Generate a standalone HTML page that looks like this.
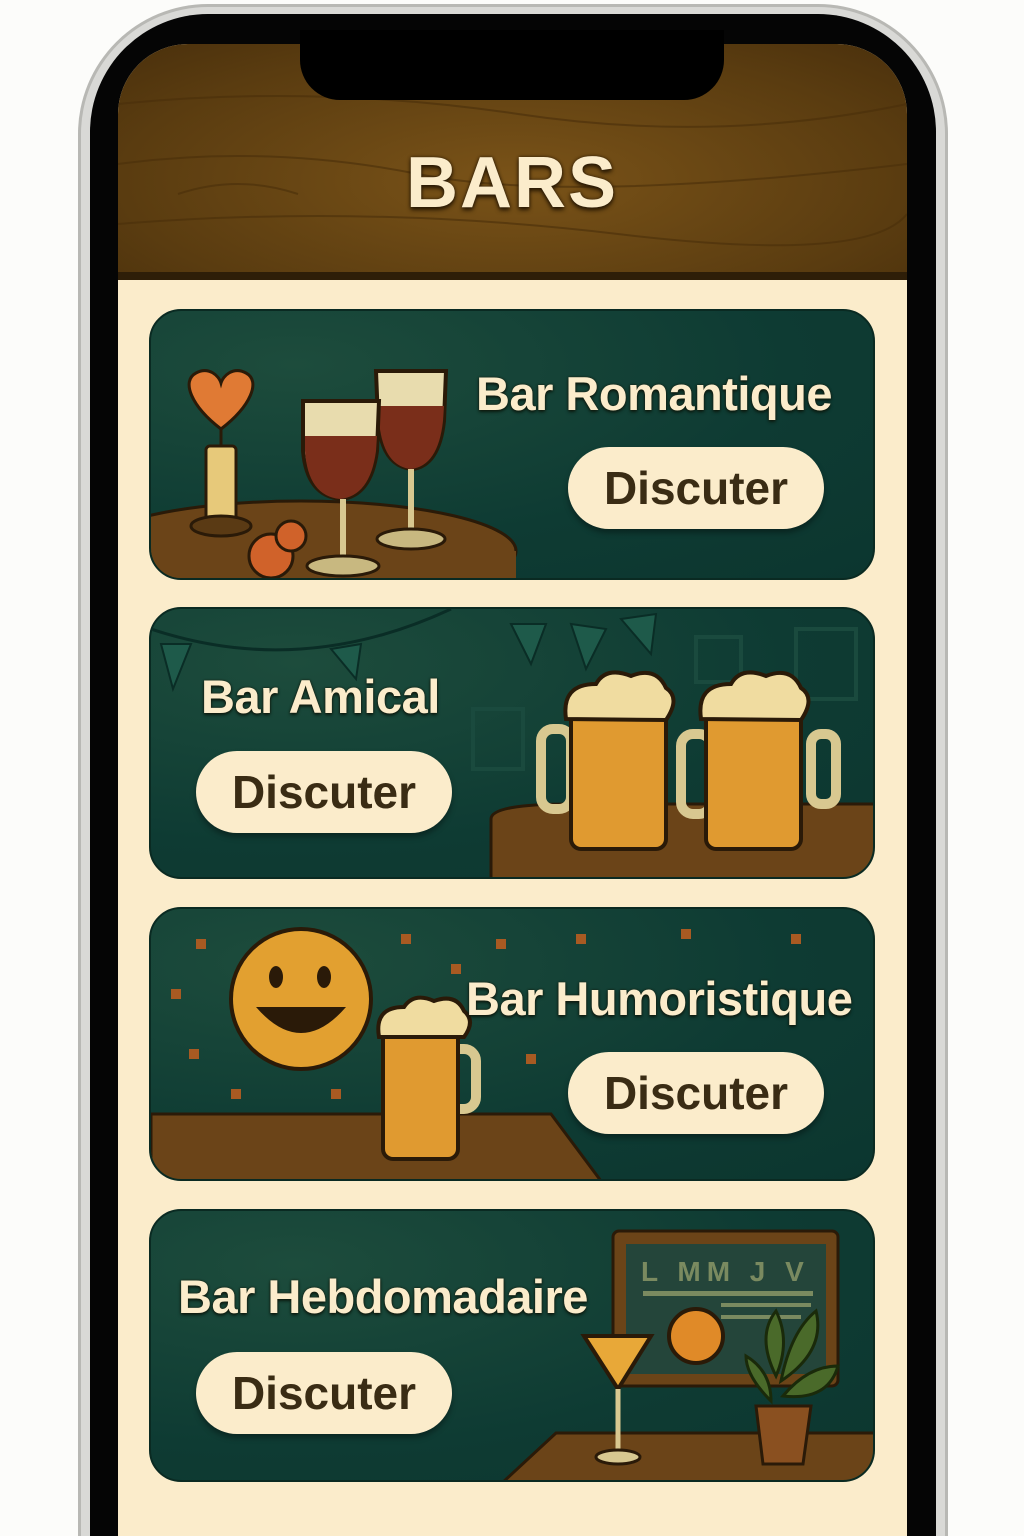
<!DOCTYPE html>
<html style="width:1024px;height:1536px;overflow:hidden"><head><meta charset="utf-8"><style>
*{margin:0;padding:0;box-sizing:border-box}
body{width:1024px;height:1536px;background:#fcfcfa;position:relative;overflow:hidden;font-family:"Liberation Sans",sans-serif}
.frame{position:absolute;left:78px;top:4px;width:870px;height:1532px;border-radius:130px 130px 0 0;background:#d9d9d6;border:3px solid #b8b8b4;border-bottom:none}
.bezel{position:absolute;left:90px;top:14px;width:846px;height:1522px;border-radius:118px 118px 0 0;background:#050505}
.screen{position:absolute;left:118px;top:44px;width:789px;height:1492px;border-radius:70px 70px 0 0;background:#fbeccb;overflow:hidden}
.head{position:absolute;left:0;top:0;width:789px;height:236px;background:radial-gradient(ellipse at 50% 60%,#7a5318,#5a3c10 70%,#4a300c);border-bottom:8px solid #2e1e08}
.notch{position:absolute;left:300px;top:30px;width:424px;height:70px;background:#000;border-radius:0 0 40px 40px}
.title{position:absolute;left:0;width:1024px;top:142px;text-align:center;font-size:72px;font-weight:bold;color:#fbeccb;letter-spacing:2px;text-shadow:0 0 3px #2a1a05,0 3px 4px #2a1a05}
.card{position:absolute;left:149px;width:726px;border-radius:32px;background:radial-gradient(ellipse at 20% 20%,#1d4c3c,#0e3b33 60%,#0c362f);overflow:hidden;border:2px solid #0a2a22}
.card svg{position:absolute;left:0;top:0}
.t{position:absolute;font-size:47px;font-weight:bold;color:#fbeccb;text-shadow:0 0 2px #1a1a0a,0 2px 3px #0a1a10;letter-spacing:-0.5px;white-space:nowrap}
.b{position:absolute;width:256px;height:82px;border-radius:41px;background:#fbeccb;color:#3a2c14;font-size:46px;font-weight:bold;text-align:center;line-height:82px;box-shadow:0 4px 6px rgba(0,0,0,.35)}
</style></head><body>
<div class="frame"></div>
<div class="bezel"></div>
<div class="screen">
 <div class="head">
  <svg width="789" height="228" style="position:absolute;left:0;top:0" fill="none" stroke="#4a2f0a" stroke-width="2" opacity=".6">
   <path d="M0 60 Q200 40 400 70 T789 60"/><path d="M0 120 Q150 100 300 130 T789 120"/><path d="M0 180 Q250 160 500 190 T789 170"/><path d="M60 150 q60 -20 120 0"/>
  </svg>
 </div>
</div>
<div class="notch"></div>
<div class="title">BARS</div>

<!-- Card 1 -->
<div class="card" style="top:309px;height:271px">
 <svg width="726" height="271">
  <ellipse cx="150" cy="240" rx="215" ry="50" fill="#6b4418" stroke="#2a1a08" stroke-width="3"/>
  <rect x="0" y="240" width="365" height="40" fill="#6b4418"/>
  <rect x="55" y="135" width="30" height="80" fill="#e7c97a" stroke="#2a1a08" stroke-width="3" rx="4"/>
  <ellipse cx="70" cy="215" rx="30" ry="10" fill="#5a3a14" stroke="#2a1a08" stroke-width="3"/>
  <line x1="70" y1="135" x2="70" y2="115" stroke="#2a1a08" stroke-width="3"/>
  <path d="M70 118 C40 95 30 70 45 62 C58 55 68 65 70 72 C72 65 82 55 95 62 C110 70 100 95 70 118Z" fill="#e07a34" stroke="#2a1a08" stroke-width="3"/>
  <circle cx="120" cy="245" r="22" fill="#d0622a" stroke="#2a1a08" stroke-width="3"/><circle cx="140" cy="225" r="15" fill="#d0622a" stroke="#2a1a08" stroke-width="3"/>
  <path d="M225 60 h70 l-2 50 q-5 45 -32 48 q-30 -3 -34 -48z" fill="#e8dcae" stroke="#2a1a08" stroke-width="4"/>
  <path d="M227 95 h66 l-1 15 q-5 45 -32 48 q-28 -3 -32 -48z" fill="#7a2e1a"/>
  <line x1="260" y1="158" x2="260" y2="222" stroke="#d8c890" stroke-width="6"/><ellipse cx="260" cy="228" rx="34" ry="10" fill="#c8b880" stroke="#2a1a08" stroke-width="3"/>
  <path d="M152 90 h76 l-2 50 q-6 45 -36 48 q-34 -3 -38 -48z" fill="#e8dcae" stroke="#2a1a08" stroke-width="4"/>
  <path d="M154 125 h72 l-1 15 q-6 45 -36 48 q-32 -3 -35 -48z" fill="#7a2e1a"/>
  <line x1="192" y1="188" x2="192" y2="252" stroke="#d8c890" stroke-width="6"/><ellipse cx="192" cy="255" rx="36" ry="10" fill="#c8b880" stroke="#2a1a08" stroke-width="3"/>
 </svg>
 <div class="t" style="left:325px;top:55px">Bar Romantique</div>
 <div class="b" style="left:417px;top:136px">Discuter</div>
</div>

<!-- Card 2 -->
<div class="card" style="top:607px;height:272px">
 <svg width="726" height="272">
  <path d="M0 20 Q150 70 300 0" stroke="#0a2d26" stroke-width="3" fill="none"/>
  <path d="M10 35 l30 0 -18 45z M180 40 l30 -5 -5 35z M360 15 l35 0 -15 40z M420 15 l35 5 -20 40z M470 10 l35 -5 -5 40z" fill="#1e5a4a" stroke="#0a2d26" stroke-width="2"/>
  <rect x="545" y="28" width="45" height="45" fill="none" stroke="#1a4a3e" stroke-width="4"/><rect x="645" y="20" width="60" height="70" fill="none" stroke="#1a4a3e" stroke-width="4"/><rect x="322" y="100" width="50" height="60" fill="none" stroke="#1a4a3e" stroke-width="4"/>
  <path d="M340 210 Q340 195 420 195 L726 195 L726 272 L340 272Z" fill="#6b4418" stroke="#2a1a08" stroke-width="3"/>
  <g stroke="#2a1a08" stroke-width="4">
   <rect x="390" y="120" width="30" height="80" rx="12" fill="none" stroke="#d8c890" stroke-width="10"/>
   <rect x="420" y="95" width="95" height="145" rx="10" fill="#e09a30"/>
   <path d="M415 110 q-5 -35 30 -35 q10 -18 35 -8 q25 -10 35 12 q15 10 0 32z" fill="#f0dca0"/>
   <rect x="530" y="125" width="30" height="80" rx="12" fill="none" stroke="#d8c890" stroke-width="10"/>
   <rect x="555" y="95" width="95" height="145" rx="10" fill="#e09a30"/>
   <path d="M550 110 q-5 -35 30 -35 q10 -18 35 -8 q25 -10 35 12 q15 10 0 32z" fill="#f0dca0"/>
  </g>
  <rect x="660" y="125" width="25" height="70" rx="10" fill="none" stroke="#d8c890" stroke-width="10"/>
 </svg>
 <div class="t" style="left:50px;top:60px">Bar Amical</div>
 <div class="b" style="left:45px;top:142px">Discuter</div>
</div>

<!-- Card 3 -->
<div class="card" style="top:907px;height:274px">
 <svg width="726" height="274">
  <path d="M0 205 L400 205 L450 272 L0 272Z" fill="#6b4418" stroke="#2a1a08" stroke-width="3"/>
  <g fill="#a85a22"><rect x="45" y="30" width="10" height="10"/><rect x="20" y="80" width="10" height="10"/><rect x="38" y="140" width="10" height="10"/><rect x="250" y="25" width="10" height="10"/><rect x="300" y="55" width="10" height="10"/><rect x="345" y="30" width="10" height="10"/><rect x="425" y="25" width="10" height="10"/><rect x="530" y="20" width="10" height="10"/><rect x="640" y="25" width="10" height="10"/><rect x="375" y="145" width="10" height="10"/><rect x="80" y="180" width="10" height="10"/><rect x="180" y="180" width="10" height="10"/></g>
  <circle cx="150" cy="90" r="70" fill="#e2a030" stroke="#2a1a08" stroke-width="4"/>
  <ellipse cx="125" cy="68" rx="7" ry="11" fill="#2a1a08"/><ellipse cx="173" cy="68" rx="7" ry="11" fill="#2a1a08"/>
  <path d="M105 98 Q150 150 195 98 Z" fill="#2a1a08"/>
  <g stroke="#2a1a08" stroke-width="4">
   <rect x="295" y="140" width="30" height="60" rx="12" fill="none" stroke="#d8c890" stroke-width="10"/>
   <rect x="232" y="115" width="75" height="135" rx="10" fill="#e09a30"/>
   <path d="M228 128 q-5 -30 25 -30 q10 -15 30 -6 q22 -8 30 10 q12 10 0 26z" fill="#f0dca0"/>
  </g>
 </svg>
 <div class="t" style="left:315px;top:62px">Bar Humoristique</div>
 <div class="b" style="left:417px;top:143px">Discuter</div>
</div>

<!-- Card 4 -->
<div class="card" style="top:1209px;height:273px">
 <svg width="726" height="273">
  <rect x="462" y="20" width="225" height="155" rx="6" fill="#6b4418" stroke="#2a1a08" stroke-width="3"/>
  <rect x="475" y="33" width="200" height="130" fill="#24453a"/>
  <text x="490" y="70" font-family="Liberation Sans" font-weight="bold" font-size="28" fill="#7a8a60" letter-spacing="6">L MM J V</text>
  <rect x="492" y="80" width="170" height="5" fill="#7a8a60"/><rect x="570" y="92" width="90" height="4" fill="#7a8a60"/><rect x="570" y="104" width="80" height="4" fill="#7a8a60"/>
  <path d="M350 273 L405 222 L726 222 L726 273Z" fill="#6b4418" stroke="#2a1a08" stroke-width="3"/>
  <circle cx="545" cy="125" r="27" fill="#e08a28" stroke="#2a1a08" stroke-width="4"/>
  <path d="M433 125 L500 125 L467 178 Z" fill="#e8a838" stroke="#2a1a08" stroke-width="4"/>
  <line x1="467" y1="178" x2="467" y2="242" stroke="#d8c890" stroke-width="5"/><ellipse cx="467" cy="246" rx="22" ry="7" fill="#d8c890" stroke="#2a1a08" stroke-width="3"/>
  <path d="M625 165 q-20 -40 0 -65 q15 30 0 65z M630 170 q10 -50 35 -70 q10 40 -35 70z M632 185 q25 -30 55 -30 q-10 35 -55 30z M620 190 q-25 -25 -25 -45 q25 15 25 45z" fill="#4a6a2a" stroke="#1a2a0a" stroke-width="3"/>
  <path d="M605 195 h55 l-8 58 h-40z" fill="#8a5020" stroke="#2a1a08" stroke-width="3"/>
 </svg>
 <div class="t" style="left:27px;top:58px">Bar Hebdomadaire</div>
 <div class="b" style="left:45px;top:141px">Discuter</div>
</div>
</body></html>
